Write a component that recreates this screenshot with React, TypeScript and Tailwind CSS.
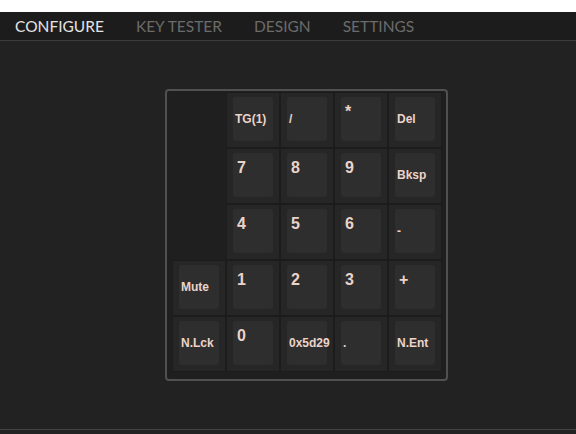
import React from 'react'

type Key = { label: string; col: number; row: number; top?: boolean }

const keys: Key[] = [
  { label: 'TG(1)', col: 1, row: 0 },
  { label: '/', col: 2, row: 0 },
  { label: '*', col: 3, row: 0, top: true },
  { label: 'Del', col: 4, row: 0 },
  { label: '7', col: 1, row: 1, top: true },
  { label: '8', col: 2, row: 1, top: true },
  { label: '9', col: 3, row: 1, top: true },
  { label: 'Bksp', col: 4, row: 1 },
  { label: '4', col: 1, row: 2, top: true },
  { label: '5', col: 2, row: 2, top: true },
  { label: '6', col: 3, row: 2, top: true },
  { label: '-', col: 4, row: 2 },
  { label: 'Mute', col: 0, row: 3 },
  { label: '1', col: 1, row: 3, top: true },
  { label: '2', col: 2, row: 3, top: true },
  { label: '3', col: 3, row: 3, top: true },
  { label: '+', col: 4, row: 3, top: true },
  { label: 'N.Lck', col: 0, row: 4 },
  { label: '0', col: 1, row: 4, top: true },
  { label: '0x5d29', col: 2, row: 4 },
  { label: '.', col: 3, row: 4 },
  { label: 'N.Ent', col: 4, row: 4 },
]

const colClass = ['col-start-1', 'col-start-2', 'col-start-3', 'col-start-4', 'col-start-5']
const rowClass = ['row-start-1', 'row-start-2', 'row-start-3', 'row-start-4', 'row-start-5']

const tabs = ['CONFIGURE', 'KEY TESTER', 'DESIGN', 'SETTINGS']

const KeyCap = ({ k }: { k: Key }) => {
  const big = k.top
  return (
    <div
      className={`${colClass[k.col]} ${rowClass[k.row]} bg-[#262626] border border-[#1c1c1c] pl-[6px] pr-[6px] pt-[4px] pb-[6px]`}
    >
      <div
        className={`h-full rounded-[3px] bg-[#2e2e2e] flex text-[#ebd3c9] font-bold ${
          big ? 'items-start pt-[3px] pl-[4px] text-[16px]' : 'items-center pl-[2px] text-[12px]'
        }`}
        style={{ fontFamily: '"Liberation Sans", Arial, sans-serif' }}
      >
        {k.label}
      </div>
    </div>
  )
}

export default function App() {
  return (
    <div className="w-[576px] h-[434px] flex flex-col bg-white overflow-hidden">
      <div className="h-[12px] bg-white" />
      <nav
        className="h-[29px] bg-[#1c1c1c] border-b border-[#3c3c3c] flex items-center gap-[32px] px-[15px] pt-[1px] text-[15.5px]"
        style={{ fontFamily: 'Lato, "Open Sans", sans-serif' }}
      >
        {tabs.map((t, i) => (
          <span key={t} className={i === 0 ? 'text-[#e4e4e4]' : 'text-[#6b6b6b]'}>
            {t}
          </span>
        ))}
      </nav>
      <main className="flex-1 bg-[#222222] border-b border-[#444444] pt-[48px] pl-[165px]">
        <div className="w-[283px] h-[292px] rounded-[4px] border-2 border-[#505050] bg-[#1f1f1f] pl-[5px] pt-[1px]">
          <div className="grid grid-cols-[repeat(5,54px)] grid-rows-[repeat(5,56px)]">
            {keys.map((k) => (
              <KeyCap key={k.label} k={k} />
            ))}
          </div>
        </div>
      </main>
      <div className="h-[4px] bg-[#222222]" />
    </div>
  )
}
